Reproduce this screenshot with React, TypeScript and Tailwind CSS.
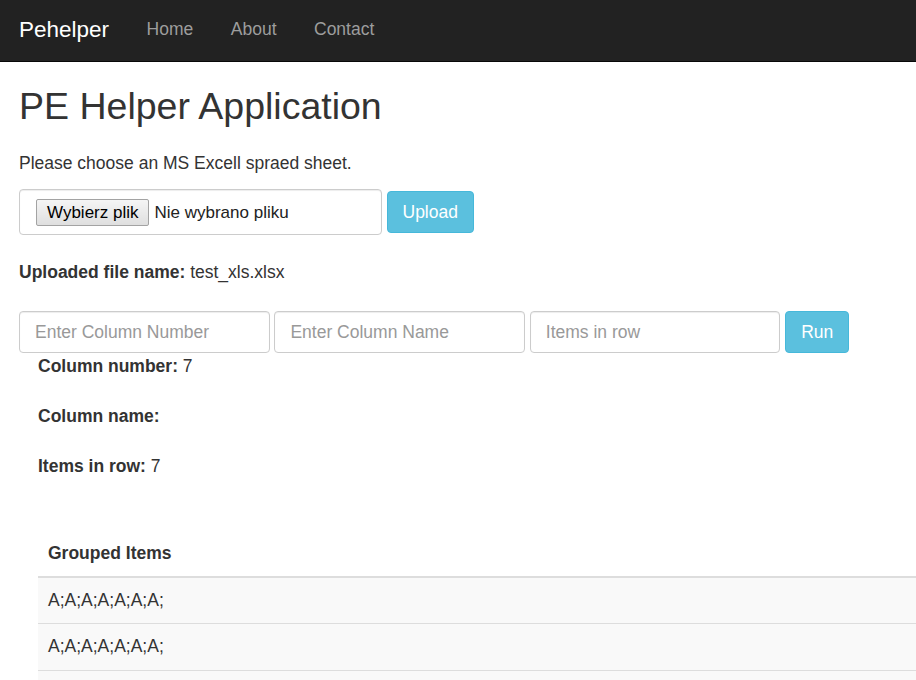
import React from "react";

export default function App() {
  return (
    <div
      className="min-h-[680px] w-full overflow-hidden bg-white text-[#333] text-[17.5px] leading-[25px]"
      style={{ fontFamily: '"Liberation Sans", Arial, Helvetica, sans-serif' }}
    >
      <nav className="flex h-[62px] items-start border-b border-[#080808] bg-[#222] pl-[19px]">
        <a className="mt-[17px] pr-[18.75px] text-[22.5px] leading-[25px] text-white">Pehelper</a>
        <a className="mt-[16.5px] px-[18.75px] text-[#9d9d9d]">Home</a>
        <a className="mt-[16.5px] px-[18.75px] text-[#9d9d9d]">About</a>
        <a className="mt-[16.5px] px-[18.75px] text-[#9d9d9d]">Contact</a>
      </nav>

      <main className="pl-[19px]">
        <h1 className="mt-[24px] text-[37.5px] font-normal leading-[41px] text-[#333]">PE Helper Application</h1>
        <p className="mt-[24px]">Please choose an MS Excell spraed sheet.</p>

        <div className="mt-[13px] flex items-center gap-[5px]">
          <div className="flex h-[46px] w-[362.5px] items-center rounded-[4px] border border-[#ccc] pl-[16px] shadow-[inset_0_1px_1px_rgba(0,0,0,0.075)]">
            <span className="flex h-[27px] items-center rounded-[2px] border border-[#a3a3a3] bg-gradient-to-b from-[#f5f5f5] to-[#dfdfdf] px-[10px] text-[17px] text-black">
              Wybierz plik
            </span>
            <span className="ml-[5px] text-[17px] text-[#222]">Nie wybrano pliku</span>
          </div>
          <button className="h-[42px] rounded-[4px] border border-[#46b8da] bg-[#5bc0de] px-[15px] text-white">
            Upload
          </button>
        </div>

        <p className="mt-[25px]">
          <b>Uploaded file name:</b> test_xls.xlsx
        </p>

        <div className="mt-[26px] flex items-center gap-[4.9px]">
          <input
            className="h-[42px] w-[250.5px] rounded-[4px] border border-[#ccc] px-[15px] text-[#555] shadow-[inset_0_1px_1px_rgba(0,0,0,0.075)] outline-none placeholder:text-[#999]"
            placeholder="Enter Column Number"
          />
          <input
            className="h-[42px] w-[250.5px] rounded-[4px] border border-[#ccc] px-[15px] text-[#555] shadow-[inset_0_1px_1px_rgba(0,0,0,0.075)] outline-none placeholder:text-[#999]"
            placeholder="Enter Column Name"
          />
          <input
            className="h-[42px] w-[250.5px] rounded-[4px] border border-[#ccc] px-[15px] text-[#555] shadow-[inset_0_1px_1px_rgba(0,0,0,0.075)] outline-none placeholder:text-[#999]"
            placeholder="Items in row"
          />
          <button className="h-[42px] rounded-[4px] border border-[#46b8da] bg-[#5bc0de] px-[15px] text-white">
            Run
          </button>
        </div>

        <div className="pl-[19px]">
          <p className="mt-[1px] mb-[25px]">
            <b>Column number:</b> 7
          </p>
          <p className="mb-[25px]">
            <b>Column name:</b>
          </p>
          <p>
            <b>Items in row:</b> 7
          </p>

          <table className="mt-[52px] w-full border-collapse">
            <thead>
              <tr>
                <th className="border-b-2 border-[#ddd] p-[10px] text-left font-bold">Grouped Items</th>
              </tr>
            </thead>
            <tbody>
              <tr className="bg-[#f9f9f9]">
                <td className="p-[10px]">A;A;A;A;A;A;A;</td>
              </tr>
              <tr className="bg-[#f9f9f9]">
                <td className="border-t border-[#ddd] px-[10px] pt-[10px] pb-[11px]">A;A;A;A;A;A;A;</td>
              </tr>
              <tr className="bg-[#f9f9f9]">
                <td className="border-t border-[#ddd] p-[10px]">A;A;A;A;A;A;A;</td>
              </tr>
            </tbody>
          </table>
        </div>
      </main>
    </div>
  );
}
